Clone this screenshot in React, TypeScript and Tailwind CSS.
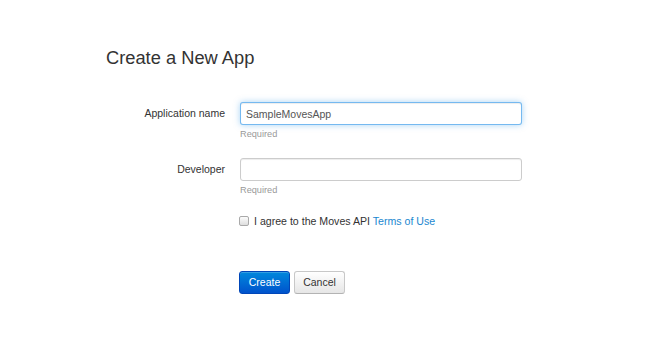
export default function App() {
  return (
    <div className="min-h-[343px] w-[661px] bg-white font-['Liberation_Sans',Arial,sans-serif] text-[#333]">
      <div className="pl-[106px] pt-[47px]">
        <h1 className="text-[18.3px] leading-[22px] text-[#333]">Create a New App</h1>

        <form className="mt-[33px]" onSubmit={(e) => e.preventDefault()}>
          {/* Application name */}
          <div className="mb-[18px] flex items-start gap-[15px]">
            <label className="w-[119px] text-right text-[10.5px] leading-[23px] text-[#333]">
              Application name
            </label>
            <div>
              <input
                type="text"
                defaultValue="SampleMovesApp"
                className="block h-[23px] w-[282px] rounded-[3px] border border-[rgba(82,168,236,0.8)] bg-white px-[5px] text-[10.5px] text-[#555] shadow-[inset_0_1px_1px_rgba(0,0,0,0.075),0_0_6px_rgba(82,168,236,0.5)] outline-none"
              />
              <div className="mt-[3px] text-[9.2px] leading-[12px] text-[#999]">Required</div>
            </div>
          </div>

          {/* Developer */}
          <div className="flex items-start gap-[15px]">
            <label className="w-[119px] text-right text-[10.5px] leading-[23px] text-[#333]">
              Developer
            </label>
            <div>
              <input
                type="text"
                className="block h-[23px] w-[282px] rounded-[3px] border border-[#ccc] bg-white px-[5px] text-[10.5px] text-[#555] shadow-[inset_0_1px_1px_rgba(0,0,0,0.075)] outline-none"
              />
              <div className="mt-[3px] text-[9.2px] leading-[12px] text-[#999]">Required</div>
            </div>
          </div>

          {/* Terms */}
          <div className="ml-[133px] mt-[18px] flex items-center gap-[5px] text-[10.6px] leading-[14px]">
            <span className="inline-block h-[10px] w-[10px] rounded-[2px] border border-[#a9a9a9] bg-gradient-to-b from-[#fcfcfc] to-[#dedede]" />
            <span>
              I agree to the Moves API <a className="text-[#1a87d0]">Terms of Use</a>
            </span>
          </div>

          {/* Actions */}
          <div className="ml-[133px] mt-[43px] flex gap-[4px]">
            <button
              type="submit"
              className="h-[23px] w-[51px] rounded-[3px] border border-[#0046b8] bg-gradient-to-b from-[#0088dc] to-[#0052cc] text-[10.5px] text-white shadow-[inset_0_1px_0_rgba(255,255,255,0.2)]"
            >
              Create
            </button>
            <button
              type="button"
              className="h-[23px] w-[51px] rounded-[3px] border border-[#c8c8c8] border-b-[#b3b3b3] bg-gradient-to-b from-white to-[#e6e6e6] text-[10.5px] text-[#333]"
            >
              Cancel
            </button>
          </div>
        </form>
      </div>
    </div>
  );
}
